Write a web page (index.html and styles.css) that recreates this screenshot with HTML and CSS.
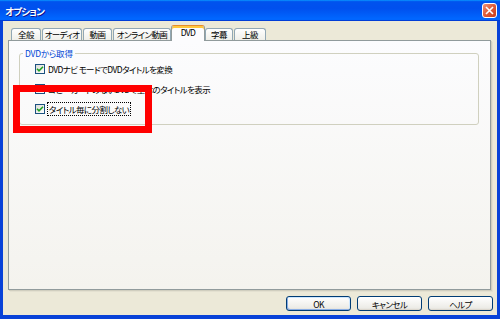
FILE: index.html
```html
<!DOCTYPE html>
<html lang="ja">
<head>
  <meta charset="UTF-8" />
  <title>オプション</title>
  <link rel="stylesheet" href="styles.css">
</head>
<body>

  <div class="window">
    <div class="titlebar">
      <span class="title">オプション</span>
      <span class="close">
        <svg width="9" height="9" viewBox="0 0 9 9"><path d="M1 1 L8 8 M8 1 L1 8" stroke="#fff" stroke-width="1.6" fill="none"/></svg>
      </span>
    </div>

    <div class="frame">
      <div class="tabs">
        <span class="tab">全般</span>
        <span class="tab">オーディオ</span>
        <span class="tab">動画</span>
        <span class="tab">オンライン動画</span>
        <span class="tab active">DVD</span>
        <span class="tab">字幕</span>
        <span class="tab">上級</span>
      </div>

      <div class="panel">
        <fieldset class="group">
          <legend>DVDから取得</legend>
          <label class="row">
            <span class="check"><svg width="8" height="8" viewBox="0 0 8 8"><path d="M1 3.8 L3 5.8 L7 1.8" stroke="#21a121" stroke-width="1.6" fill="none"/></svg></span>
            <span>DVDナビ モードでDVDタイトルを変換</span>
          </label>
          <label class="row">
            <span class="check"></span>
            <span>コピーガードのないDVDで全体のタイトルを表示</span>
          </label>
          <label class="row">
            <span class="check"><svg width="8" height="8" viewBox="0 0 8 8"><path d="M1 3.8 L3 5.8 L7 1.8" stroke="#21a121" stroke-width="1.6" fill="none"/></svg></span>
            <span class="focused">タイトル毎に分割しない</span>
          </label>
        </fieldset>
      </div>

      <div class="buttons">
        <button class="btn default">OK</button>
        <button class="btn">キャンセル</button>
        <button class="btn">ヘルプ</button>
      </div>
    </div>

    <div class="highlight"></div>
  </div>

</body>
</html>
```

FILE: styles.css
```css
body {
  margin: 0;
  background: #ece9d8;
  font-family: "Noto Sans CJK JP", "Liberation Sans", sans-serif;
  font-size: 8.5px;
  letter-spacing: -0.6px;
  font-feature-settings: "palt";
  color: #000;
}
.window {
  position: relative;
  width: 500px;
  height: 319px;
  display: flex;
  flex-direction: column;
}
.titlebar {
  height: 21px;
  flex: none;
  display: flex;
  align-items: center;
  justify-content: space-between;
  padding: 0 3px 0 5px;
  background: linear-gradient(180deg, #0997ff, #0053ee 8%, #0050ee 40%, #06f 88%, #06f 93%, #005bff 95%, #003dd7 96%, #003dd7);
}
.title {
  color: #fff;
  font-weight: bold;
  font-size: 9.5px;
  letter-spacing: -0.8px;
  text-shadow: 1px 1px #0f1089;
}
.close {
  width: 15px;
  height: 15px;
  box-sizing: border-box;
  border: 1px solid #fff;
  border-radius: 3px;
  background: linear-gradient(135deg, #f0937a, #e0603e 45%, #c63d1c);
  display: flex;
  align-items: center;
  justify-content: center;
}
.frame {
  flex: 1;
  display: flex;
  flex-direction: column;
  border: solid #0842d8;
  border-width: 0 3px 4px;
  padding: 4px 6px 0 5px;
}
.tabs {
  height: 15px;
  display: flex;
  align-items: flex-end;
  gap: 1px;
  padding-left: 3px;
}
.tab {
  box-sizing: border-box;
  height: 12px;
  line-height: 11px;
  text-align: center;
  border: 1px solid #91a7b4;
  border-bottom: 0;
  border-radius: 3px 3px 0 0;
  background: linear-gradient(180deg, #fff, #fafaf9 26%, #f0f0ea 95%, #ecebe6);
}
.tab:nth-child(1) { width: 30px; }
.tab:nth-child(2) { width: 40px; }
.tab:nth-child(3) { width: 29px; }
.tab:nth-child(4) { width: 58px; }
.tab:nth-child(6) { width: 28px; }
.tab:nth-child(7) { width: 32px; }
.tab.active {
  position: relative;
  z-index: 1;
  width: 34px;
  height: 16px;
  line-height: 13px;
  margin: 0 -1px -1px -1px;
  background: #fcfcfe;
  border-color: #919b9c;
  border-top: 1px solid #e68b2c;
  box-shadow: inset 0 2px #ffc83c;
}
.panel {
  flex: 1;
  border: 1px solid #919b9c;
  background: linear-gradient(180deg, #fcfcfe, #f4f3ee);
  box-shadow: 1px 1px #d0cebf, 2px 2px #e3e0d0;
  padding: 6px 11px 0 10px;
}
.group {
  margin: 0;
  padding: 0 0 5px 0;
  border: 1px solid #d0d0bf;
  border-radius: 3px;
}
.group legend {
  color: #0046d5;
  padding: 0 2px;
  margin-left: 3px;
  letter-spacing: -0.2px;
}
.row {
  display: flex;
  align-items: center;
  gap: 3px;
  height: 20px;
  padding-left: 15px;
}
.check {
  box-sizing: border-box;
  width: 10px;
  height: 10px;
  border: 1px solid #1c5180;
  background: linear-gradient(135deg, #dcdcd7, #fff);
  display: flex;
  align-items: center;
  justify-content: center;
}
.focused {
  outline: 1px dotted #000;
  padding: 0 1px;
}
.buttons {
  height: 25px;
  display: flex;
  justify-content: flex-end;
  align-items: center;
  gap: 6px;
  padding-top: 2px;
  margin-right: -2px;
  box-sizing: border-box;
}
.btn {
  width: 65px;
  height: 15px;
  padding: 0;
  font: inherit;
  letter-spacing: inherit;
  color: #000;
  border: 1px solid #003c74;
  border-radius: 3px;
  background: linear-gradient(180deg, #fff, #ecebe6 86%, #d6d0c5);
}
.btn.default {
  box-shadow: inset -1px 1px #cee7ff, inset 1px -1px #89ade4;
}
.highlight {
  position: absolute;
  left: 13px;
  top: 85px;
  width: 139px;
  height: 48px;
  box-sizing: border-box;
  border: 7px solid #ff0000;
}
```
